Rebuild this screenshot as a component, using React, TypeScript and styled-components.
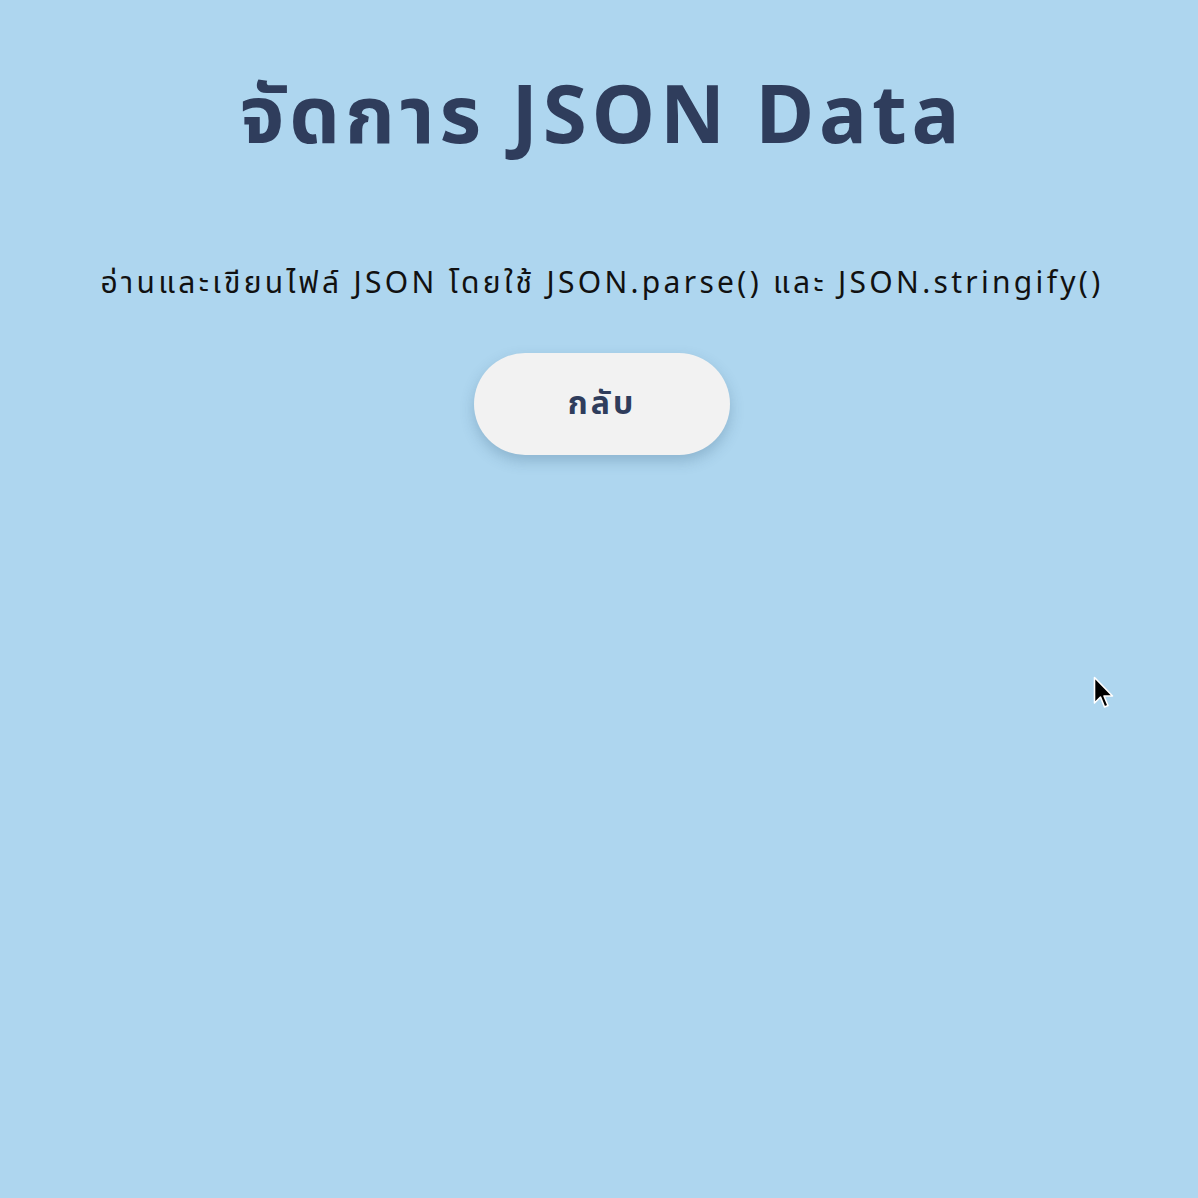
import React from "react";
import styled, { createGlobalStyle } from "styled-components";

const GlobalStyle = createGlobalStyle`
    html, body {
        margin: 0;
        padding: 0;
        background: #aed6ef;
        min-height: 100%;
    }
    body {
        font-family: "Noto Sans", "Noto Sans Thai", "Lato", sans-serif;
    }
`;

const Page = styled.main`
    min-height: 1198px;
    display: flex;
    flex-direction: column;
    align-items: center;
    padding: 57px 0 0 6px;
    box-sizing: border-box;
`;

const Title = styled.h1`
    margin: 0;
    font-size: 80px;
    line-height: 110px;
    font-weight: 700;
    color: #2f3d5c;
    letter-spacing: 4.9px;
`;

const Subtitle = styled.p`
    margin: 95px 0 0;
    font-size: 30px;
    line-height: 40px;
    color: #111111;
    letter-spacing: 3.3px;
`;

const BackButton = styled.button`
    margin-top: 51px;
    width: 256px;
    height: 102px;
    border: none;
    border-radius: 51px;
    background: #f2f2f2;
    color: #2f3d5c;
    font-family: inherit;
    font-size: 32px;
    font-weight: 700;
    letter-spacing: 3px;
    box-shadow: 0 6px 14px rgba(40, 80, 110, 0.25);
    cursor: pointer;
`;

const Cursor = styled.svg`
    position: absolute;
    left: 1093px;
    top: 676px;
    width: 24px;
    height: 38px;
    pointer-events: none;
`;

export default function App() {
    return (
        <>
            <GlobalStyle />
            <Page>
                <Title>จัดการ JSON Data</Title>
                <Subtitle>
                    อ่านและเขียนไฟล์ JSON โดยใช้ JSON.parse() และ JSON.stringify()
                </Subtitle>
                <BackButton>กลับ</BackButton>
            </Page>
            <Cursor viewBox="0 0 24 38">
                <path
                    d="M1.5 1.5 L1.5 27 L7.5 21 L11.5 31 L15 29.5 L11 20 L19.5 20 Z"
                    fill="#000"
                    stroke="#fff"
                    strokeWidth="1.6"
                    strokeLinejoin="round"
                />
            </Cursor>
        </>
    );
}
